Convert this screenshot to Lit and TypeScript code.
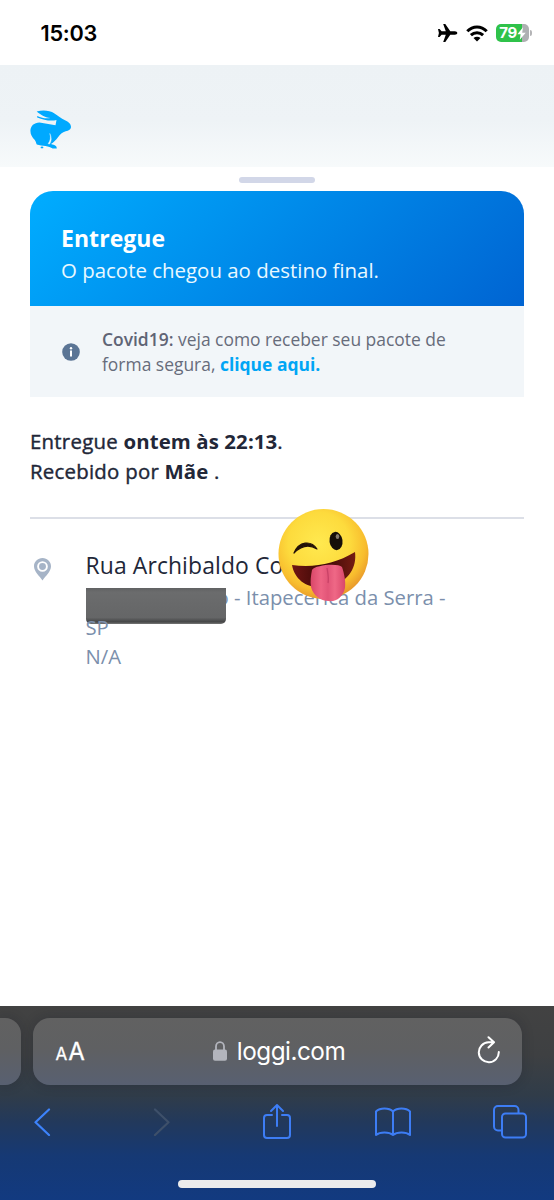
import { LitElement, html, css } from "lit";
import { customElement } from "lit/decorators.js";

@customElement("status-bar")
class StatusBar extends LitElement {
  static styles = css`
    :host {
      display: flex;
      height: 65px;
      box-sizing: border-box;
      padding: 1px 22px 0 40.5px;
      align-items: center;
      justify-content: space-between;
      background: #fff;
      color: #000;
      font-family: Inter, sans-serif;
    }
    .time { font-size: 21.7px; font-weight: 600; line-height: 28px; letter-spacing: -0.25px; }
    .icons { display: flex; align-items: center; gap: 8px; padding-top: 0; }
    svg { display: block; }
    .battery { display: flex; align-items: center; gap: 1px; }
    .cell {
      width: 33px; height: 18px; border-radius: 5px;
      background: linear-gradient(90deg, #2fc24a 79%, #aeb0b2 79%);
      display: flex; align-items: center; justify-content: center;
      color: #fff; font-size: 15px; font-weight: 700; line-height: 18px; letter-spacing: -0.3px;
    }
    .cap { width: 2px; height: 6px; border-radius: 0 2px 2px 0; background: #b4b4b6; }
  `;
  render() {
    return html`
      <span class="time">15:03</span>
      <div class="icons">
        <svg width="21" height="20" viewBox="0 0 21 20">
          <path d="M20.300 10c0-.9-1.100-1.700-2.400-1.700h-4.600L8.300 1H6.200l2.600 7.300H4.600L2.600 6H1l.9 4L1 14h1.600l2-2.300h4.200L6.200 19h2.100l5-7.300h4.600c1.300 0 2.400-.8 2.400-1.700z"/>
        </svg>
        <svg width="22" height="17" viewBox="0 0 22 17" fill="none" stroke="#000" stroke-width="3">
          <path d="M1.300 6.300C6.800.600 15.200.600 20.700 6.300"/>
          <path d="M4.900 10.200C8.400 6.800 13.600 6.800 17.100 10.200"/>
          <path d="M11 16.500 7.500 13.100C9.500 11.400 12.500 11.400 14.500 13.100z" fill="#000" stroke="none"/>
        </svg>
        <div class="battery">
          <div class="cell"><span>79</span>
            <svg width="9" height="13" viewBox="0 0 9 13"><path d="M6 .300.400 7.200h3.200L2.800 12.700l5.900-7H5.200z" fill="#fff"/></svg>
          </div>
          <div class="cap"></div>
        </div>
      </div>
    `;
  }
}

@customElement("tracking-page")
class TrackingPage extends LitElement {
  static styles = css`
    :host {
      display: flex; flex-direction: column;
      height: 941px;
      background: #fff;
      font-family: "Open Sans", sans-serif;
      white-space: nowrap;
    }
    svg { display: block; }
    .top {
      height: 102px; box-sizing: border-box; padding: 44px 30px 0;
      background: linear-gradient(#edf2f5, #eef3f6 55%, #f7fafb);
    }
    .handle { width: 76px; height: 6px; margin: 9.5px auto 8.5px; border-radius: 3px; background: #d2d7e8; }
    .body { margin: 0 30px; }
    .card {
      height: 115px; box-sizing: border-box; padding: 31px 31px 0;
      border-radius: 23px 23px 0 0;
      background: linear-gradient(135deg, #00adff, #0064d2);
      color: #fff;
    }
    .title { font-size: 23px; font-weight: 700; line-height: 32px; letter-spacing: 0.05px; }
    .sub { font-size: 20.45px; line-height: 32px; color: #e9f8ff; }
    .notice {
      height: 91px; display: flex; align-items: center; gap: 22px;
      box-sizing: border-box; padding: 1px 0 0 32px; background: #f2f6f9;
      font-size: 17.45px; line-height: 25px; color: #676c7b;
    }
    .notice b { font-weight: 600; color: #5f6475; }
    .notice .link { font-weight: 700; color: #00a5f5; }
    .done {
      padding-top: 29px; height: 91px; border-bottom: 2px solid #dcdfe7;
      font-size: 20.4px; line-height: 30px; color: #222738;
      -webkit-text-stroke: 0.4px #222738; letter-spacing: 0.25px;
    }
    .done b { font-weight: 700; letter-spacing: 0.1px; -webkit-text-stroke: 0; }
    .place { display: flex; gap: 34px; padding: 30px 0 0 4px; }
    .pin { padding-top: 9px; }
    .address { position: relative; line-height: 29.5px; font-size: 20.3px; color: #7b8fac; padding-left: 0.5px; }
    .street { font-size: 22.9px; line-height: 33px; color: #222738; letter-spacing: 0.12px; }
    .city { padding-top: 1px; }
    .covered { display: inline-block; width: 131px; }
    .redact {
      position: absolute; left: 0.6px; top: 39px; width: 140.4px; height: 36px;
      border-radius: 0 0 5px 5px;
      background: linear-gradient(#606162, #6b6c6d 12%, #656667 82%, #454647 94%, #777);
    }
    .over { position: relative; }
    .emoji { position: absolute; left: 192px; top: -42px; }
  `;
  render() {
    return html`
      <div class="top">
        <svg width="42" height="41" viewBox="0 0 42 41" fill="#00a9ff">
          <path d="M6.700 2.400C13 .900 19.500 1.300 24.500 4.400 28 6.800 31 9.200 35 11.200c3.500 1.700 6 3.700 6 6.500 0 2.800-2.300 4-5.300 4.500-3.500.700-5.700 3.500-7.700 6-2 2.600-4.400 5-7 6.900 1.800.500 3.600 1 4.800 1.800.8.800 1 1.700 1 2.700h-4.100c-1.900-1.500-4.300-2.300-7.200-2.700-3-.4-6-.5-8.700-1.400C6 34 6 32.600 4.800 31 2.200 28.500.400 25.500.400 21.800.600 16.800 4 13.500 9.500 13.400l16 2.800 1-5.200c-5.500 1.400-12.700.2-19.300-2.600V6.900C12 9.300 16.500 9.800 20.500 9 14.500 8.300 10.700 5.500 6.700 2.400z"/>
          <path d="M19.800 24.500c1.200 4 .7 7-1.700 10.200l1.500.4c2-3.200 2.300-6.500.2-10.600z" fill="#f3f8fa" stroke="#f3f8fa" stroke-width=".4"/>
          <ellipse cx="12" cy="38.400" rx="1.400" ry=".9"/>
        </svg>
      </div>
      <div class="handle"></div>
      <div class="body">
        <div class="card">
          <div class="title">Entregue</div>
          <div class="sub">O pacote chegou ao destino final.</div>
        </div>
        <div class="notice">
          <svg width="18" height="18" viewBox="0 0 18 18">
            <circle cx="9" cy="9" r="8.800" fill="#5b7595"/>
            <circle cx="9" cy="5.200" r="1.200" fill="#fff"/><rect x="8" y="7.500" width="2" height="6" fill="#fff"/>
          </svg>
          <div>
            <div class="n1"><b>Covid19:</b> veja como receber seu pacote de</div>
            <div class="n2">forma segura, <span class="link">clique aqui.</span></div>
          </div>
        </div>
        <div class="done">
          <div>Entregue <b>ontem às 22:13</b>.</div>
          <div>Recebido por <b>Mãe</b> .</div>
        </div>
        <div class="place">
          <svg class="pin" width="17" height="23" viewBox="0 0 17 23">
            <path d="M8.500 0C3.700 0 0 3.700 0 8.300 0 13.700 5.500 18 8.500 22.500 11.500 18 17 13.700 17 8.300 17 3.700 13.300 0 8.500 0z" fill="#a6b4c7"/>
            <circle cx="8.500" cy="8.500" r="4.400" fill="none" stroke="#fff" stroke-width="1.900"/>
          </svg>
          <div class="address">
            <div class="street">Rua Archibaldo Co</div>
            <div class="city"><span class="covered"></span>o - Itapecerica da Serra -</div>
            <div class="redact"></div>
            <div class="over">SP</div>
            <div>N/A</div>
            <svg class="emoji" width="94" height="96" viewBox="0 0 94 96">
              <defs>
                <radialGradient id="skin" cx=".45" cy=".38" r=".62">
                  <stop offset="0" stop-color="#ffe94f"/><stop offset=".55" stop-color="#fddb3d"/>
                  <stop offset=".83" stop-color="#f8bd2e"/><stop offset="1" stop-color="#e99a2b"/>
                </radialGradient>
                <linearGradient id="mouth" x1="0" x2="1"><stop offset="0" stop-color="#701513"/><stop offset=".5" stop-color="#3a0806"/><stop offset="1" stop-color="#751b12"/></linearGradient>
                <linearGradient id="tongue" x1="0" x2="1"><stop offset="0" stop-color="#d94768"/><stop offset=".3" stop-color="#ee6484"/><stop offset=".5" stop-color="#e25578"/><stop offset=".7" stop-color="#ef6886"/><stop offset="1" stop-color="#d9476a"/></linearGradient>
              </defs>
              <circle cx="46.500" cy="47" r="45" fill="url(#skin)"/>
              <path d="M15 58C37 61 58 57 78 45C80 60 72 74 54 79C34 84 18 75 15 58z" fill="url(#mouth)"/>
              <path d="M35 63C38 58 61 56 65 60C67 66 69 74 68 81C66 90 59 95 52 94C43 94 36 88 34 80C33 74 34 68 35 63z" fill="url(#tongue)"/>
              <path d="M50 61C51 67 52 71 51 76" fill="none" stroke="#c94267" stroke-width="1.300"/>
              <path d="M17 46C22 34 34 33 40 42C32 37 25 38 17 46z" fill="#231208" stroke="#231208" stroke-width="1.200" stroke-linejoin="round"/>
              <ellipse cx="59" cy="34" rx="6.500" ry="9.200" transform="rotate(-8 59 34)" fill="#160e09"/>
              <ellipse cx="60.500" cy="29.500" rx="1.800" ry="2.600" fill="#83796c"/>
            </svg>
          </div>
        </div>
      </div>
    `;
  }
}

@customElement("browser-bar")
class BrowserBar extends LitElement {
  static styles = css`
    :host {
      display: flex; flex-direction: column;
      height: 194px; box-sizing: border-box; padding-top: 12px;
      background: linear-gradient(#424242, #3e4042 25%, #303c49 46%, #22395c 60%, #163974 77%, #123a80);
      color: #fff; font-family: Inter, sans-serif;
      overflow: hidden;
    }
    svg { display: block; }
    .tabs { display: flex; gap: 12px; height: 66.5px; }
    .peek, .field { background: linear-gradient(#616161, #5f6062 45%, #586071); box-shadow: 0 0 12px rgba(20, 25, 35, .22); }
    .peek { width: 20.5px; border-radius: 0 16px 16px 0; }
    .field { width: 489px; border-radius: 17px; box-sizing: border-box; padding: 0 20px 0 23px; display: flex; align-items: center; justify-content: space-between; }
    .aa { display: flex; align-items: baseline; gap: 1px; font-size: 17px; line-height: 30px; width: 32px; padding-top: 4px; -webkit-text-stroke: 0.3px #fff; }
    .big { font-size: 24px; }
    .host { display: flex; align-items: center; gap: 10px; font-size: 24.3px; line-height: 30px; margin-right: 5px; }
    .name { letter-spacing: -0.5px; }
    .tools { display: flex; justify-content: space-between; align-items: center; padding: 0 26px 0 23.5px; height: 74px; }
    .slot { width: 36px; display: flex; justify-content: center; }
    .forward { padding-left: 4px; }
    .share { margin-left: -2px; }
    .home { width: 198px; height: 8px; border-radius: 4px; background: #ececec; margin: 21.5px auto 0; }
  `;
  render() {
    return html`
      <div class="tabs">
        <div class="peek"></div>
        <div class="field">
          <div class="aa"><span>A</span><span class="big">A</span></div>
          <div class="host">
            <svg width="14" height="20" viewBox="0 0 14 20"><path d="M3 9V5.500a4 4.300 0 0 1 8 0V9" fill="none" stroke="#b3b5bd" stroke-width="1.800"/><rect y="8.500" width="14" height="11.200" rx="2" fill="#b3b5bd"/></svg>
            <span class="name">loggi.com</span>
          </div>
          <svg width="26" height="30" viewBox="0 0 26 30" fill="none" stroke="#fff" stroke-width="2" stroke-linecap="round" stroke-linejoin="round"><path d="M17.500 6.300H12.500A10 10 0 1 0 22.800 16M12.500 1.200 18 6.300 12.500 11.500"/></svg>
        </div>
      </div>
      <div class="tools">
        <div class="slot"><svg width="18" height="28" viewBox="0 0 18 28" fill="none" stroke="#3d83fb" stroke-width="2.200" stroke-linecap="round" stroke-linejoin="round"><path d="M16 1.500 2.500 14.300 16 27"/></svg></div>
        <div class="slot forward"><svg width="18" height="28" viewBox="0 0 18 28" fill="none" stroke="#3e506a" stroke-width="2.200" stroke-linecap="round" stroke-linejoin="round"><path d="M2 1.500 15.500 14.300 2 27"/></svg></div>
        <div class="slot share"><svg width="30" height="37" viewBox="0 0 30 37" fill="none" stroke="#3d7df5" stroke-width="2" stroke-linecap="round" stroke-linejoin="round"><path d="M10 12H5a3 3 0 0 0-3 3v17a3 3 0 0 0 3 3h20a3 3 0 0 0 3-3V15a3 3 0 0 0-3-3h-5M15 23V2M9 8l6-6 6 6"/></svg></div>
        <div class="slot"><svg width="36" height="30" viewBox="0 0 36 30" fill="none" stroke="#3d7df5" stroke-width="2" stroke-linejoin="round"><path d="M18 4.500C14 .600 5 .600 1 4.500V28C5 24.500 14 24.500 18 28 22 24.500 31 24.500 35 28V4.500C31 .600 22 .600 18 4.500zV28"/></svg></div>
        <div class="slot"><svg width="34" height="34" viewBox="0 0 34 34" fill="none" stroke="#3d7df5" stroke-width="2"><path d="M9 25.500H5a4 4 0 0 1-4-4V5a4 4 0 0 1 4-4h16.500a4 4 0 0 1 4 4v3.500"/><rect x="9" y="8.500" width="24" height="24" rx="3.500"/></svg></div>
      </div>
      <div class="home"></div>
    `;
  }
}

@customElement("app-root")
class AppRoot extends LitElement {
  static styles = css`
    :host { display: block; width: 554px; height: 1200px; overflow: hidden; background: #fff; }
  `;
  render() {
    return html`<status-bar></status-bar><tracking-page></tracking-page><browser-bar></browser-bar>`;
  }
}
